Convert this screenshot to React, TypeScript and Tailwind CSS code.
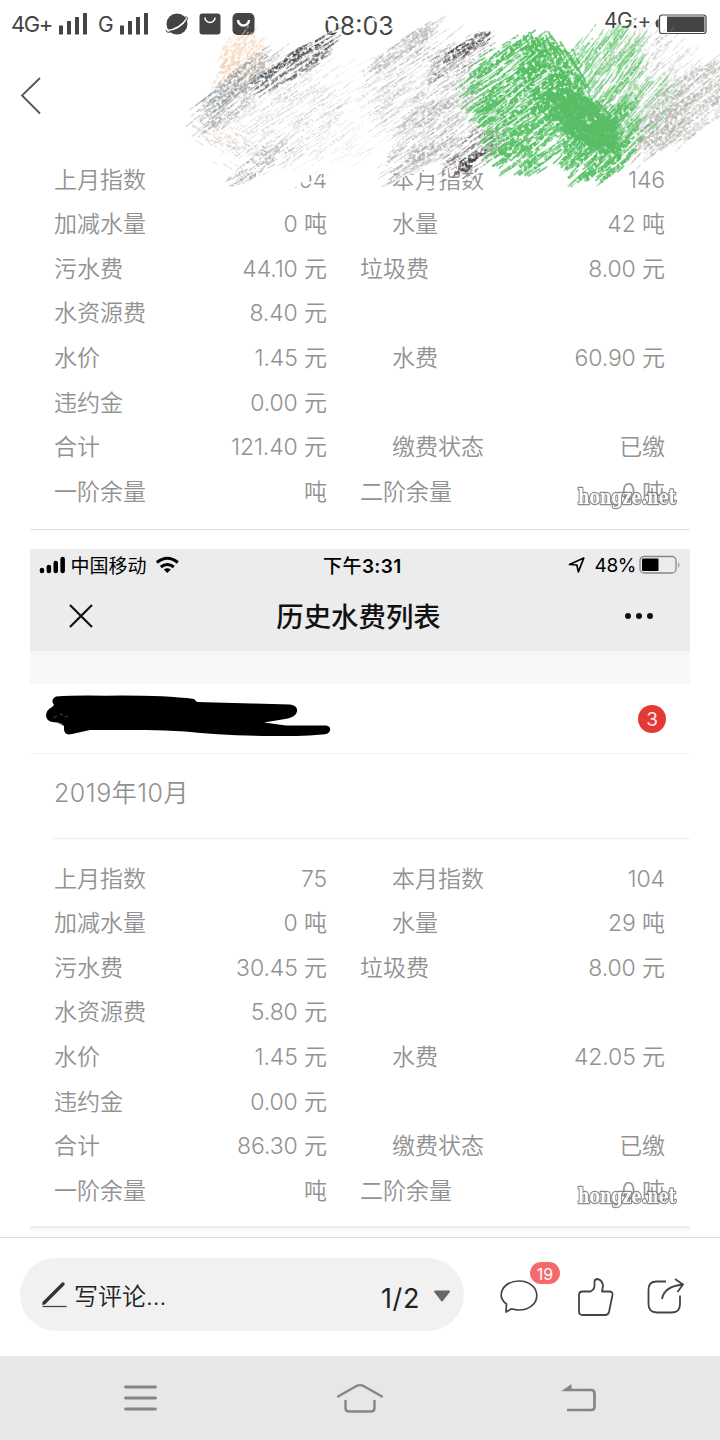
import React from 'react';

type Row = {
  label: string;
  value: string;
  label2?: string;
  value2?: string;
  indent?: boolean;
};

const septemberRows: Row[] = [
  { label: '上月指数', value: '104', label2: '本月指数', value2: '146', indent: true },
  { label: '加减水量', value: '0 吨', label2: '水量', value2: '42 吨', indent: true },
  { label: '污水费', value: '44.10 元', label2: '垃圾费', value2: '8.00 元' },
  { label: '水资源费', value: '8.40 元' },
  { label: '水价', value: '1.45 元', label2: '水费', value2: '60.90 元', indent: true },
  { label: '违约金', value: '0.00 元' },
  { label: '合计', value: '121.40 元', label2: '缴费状态', value2: '已缴', indent: true },
  { label: '一阶余量', value: '吨', label2: '二阶余量', value2: '0 吨' },
];

const octoberRows: Row[] = [
  { label: '上月指数', value: '75', label2: '本月指数', value2: '104', indent: true },
  { label: '加减水量', value: '0 吨', label2: '水量', value2: '29 吨', indent: true },
  { label: '污水费', value: '30.45 元', label2: '垃圾费', value2: '8.00 元' },
  { label: '水资源费', value: '5.80 元' },
  { label: '水价', value: '1.45 元', label2: '水费', value2: '42.05 元', indent: true },
  { label: '违约金', value: '0.00 元' },
  { label: '合计', value: '86.30 元', label2: '缴费状态', value2: '已缴', indent: true },
  { label: '一阶余量', value: '吨', label2: '二阶余量', value2: '0 吨' },
];

// Crayon patches: an ellipse turned to the stroke direction, filled with hatching
type Patch = {
  x: number;
  y: number;
  along: number;
  across: number;
  angle: number;
  count: number;
  len: number;
  width: number;
  color: string;
  opacity: number;
};

const greyPatches: Patch[] = [
  { x: 243, y: 58, along: 26, across: 22, angle: -52, count: 190, len: 10, width: 1.8, color: '#f8d3b6', opacity: 0.5 },
  { x: 230, y: 74, along: 20, across: 12, angle: -52, count: 50, len: 8, width: 1.3, color: '#eec3a0', opacity: 0.5 },
  { x: 220, y: 134, along: 26, across: 12, angle: 38, count: 60, len: 6, width: 1.2, color: '#e4c4b0', opacity: 0.5 },
  { x: 284, y: 112, along: 62, across: 56, angle: -34, count: 430, len: 14, width: 1, color: '#a0a0a0', opacity: 0.32 },
  { x: 236, y: 146, along: 44, across: 26, angle: 30, count: 60, len: 8, width: 1.2, color: '#a5a2a0', opacity: 0.4 },
  { x: 238, y: 83, along: 48, across: 13, angle: -38, count: 130, len: 26, width: 1.4, color: '#969a9b', opacity: 0.45 },
  { x: 224, y: 108, along: 32, across: 14, angle: -36, count: 80, len: 18, width: 1.4, color: '#9b9f9f', opacity: 0.4 },
  { x: 296, y: 64, along: 46, across: 13, angle: -33, count: 110, len: 22, width: 1.3, color: '#5a5a5a', opacity: 0.5 },
  { x: 290, y: 59, along: 42, across: 4, angle: -33, count: 38, len: 20, width: 1.6, color: '#4a4a4a', opacity: 0.6 },
  { x: 260, y: 164, along: 34, across: 12, angle: -33, count: 55, len: 18, width: 1.4, color: '#a0a0a0', opacity: 0.45 },
  { x: 360, y: 110, along: 76, across: 50, angle: -33, count: 190, len: 14, width: 1, color: '#bbb', opacity: 0.28 },
  { x: 425, y: 84, along: 62, across: 44, angle: -34, count: 330, len: 20, width: 1.1, color: '#a4a4a4', opacity: 0.34 },
  { x: 406, y: 46, along: 44, across: 8, angle: -36, count: 60, len: 22, width: 1.6, color: '#a8a8a8', opacity: 0.45 },
  { x: 438, y: 130, along: 62, across: 28, angle: -34, count: 280, len: 19, width: 1.1, color: '#a29ea0', opacity: 0.4 },
  { x: 418, y: 160, along: 34, across: 8, angle: -34, count: 50, len: 22, width: 1.5, color: '#a8a8a8', opacity: 0.45 },
  { x: 458, y: 58, along: 38, across: 18, angle: -33, count: 90, len: 14, width: 1.1, color: '#6b6468', opacity: 0.4 },
  { x: 468, y: 46, along: 24, across: 7, angle: -33, count: 40, len: 15, width: 1.6, color: '#4c474a', opacity: 0.6 },
  { x: 478, y: 148, along: 36, across: 18, angle: -34, count: 110, len: 15, width: 1.2, color: '#6b6468', opacity: 0.5 },
  { x: 474, y: 160, along: 20, across: 7, angle: -34, count: 32, len: 15, width: 2, color: '#454043', opacity: 0.65 },
  { x: 644, y: 82, along: 56, across: 54, angle: -46, count: 380, len: 15, width: 1.1, color: '#b4acae', opacity: 0.32 },
  { x: 688, y: 104, along: 62, across: 28, angle: -40, count: 260, len: 26, width: 1.5, color: '#b0adaa', opacity: 0.42 },
  { x: 662, y: 130, along: 44, across: 14, angle: -44, count: 80, len: 24, width: 1.5, color: '#aeaba8', opacity: 0.42 },
];

const greenPatches: Patch[] = [
  { x: 598, y: 86, along: 60, across: 42, angle: -53, count: 300, len: 24, width: 1.4, color: '#66c871', opacity: 0.6 },
  { x: 635, y: 118, along: 52, across: 22, angle: -48, count: 110, len: 18, width: 1.1, color: '#7ecb87', opacity: 0.5 },
  { x: 516, y: 82, along: 52, across: 38, angle: -36, count: 330, len: 26, width: 1.9, color: '#55c163', opacity: 0.8 },
  { x: 555, y: 76, along: 42, across: 27, angle: 60, count: 230, len: 18, width: 2.2, color: '#55c163', opacity: 0.8 },
  { x: 533, y: 132, along: 50, across: 36, angle: -37, count: 250, len: 22, width: 1.8, color: '#58c267', opacity: 0.8 },
  { x: 602, y: 142, along: 44, across: 32, angle: -44, count: 270, len: 20, width: 1.9, color: '#57c166', opacity: 0.8 },
  { x: 571, y: 108, along: 56, across: 22, angle: 42, count: 300, len: 20, width: 3, color: '#56bf64', opacity: 0.8 },
];

const corePatch: Patch = {
  x: 584, y: 120, along: 38, across: 19, angle: 36, count: 190, len: 14, width: 4, color: '#5abe66', opacity: 0.55,
};

const highlightPatch: Patch = {
  x: 508, y: 94, along: 46, across: 40, angle: -34, count: 80, len: 16, width: 1.1, color: '#fff', opacity: 0.7,
};

const makeRandom = (seed: number) => {
  let s = seed;
  return () => {
    s = (s * 16807) % 2147483647;
    return s / 2147483647;
  };
};

const hatch = (patch: Patch, seed: number) => {
  const rnd = makeRandom(seed * 7919 + 13);
  const a = (patch.angle * Math.PI) / 180;
  const lines: string[] = [];
  for (let i = 0; i < patch.count; i++) {
    // Strokes thin out towards the rim, so a patch has no hard outline
    const r = Math.sqrt(rnd()) * (0.8 + rnd() * 0.35);
    const t = rnd() * Math.PI * 2;
    const u = r * Math.cos(t) * patch.along;
    const v = r * Math.sin(t) * patch.across;
    const cx = patch.x + u * Math.cos(a) - v * Math.sin(a);
    const cy = patch.y + u * Math.sin(a) + v * Math.cos(a);
    const half = (patch.len * (0.3 + rnd())) / 2;
    const b = a + (rnd() - 0.5) * 0.16;
    const dx = Math.cos(b) * half;
    const dy = Math.sin(b) * half;
    lines.push(
      `M${(cx - dx).toFixed(1)} ${(cy - dy).toFixed(1)}L${(cx + dx).toFixed(1)} ${(cy + dy).toFixed(1)}`
    );
  }
  return lines;
};

const Hatching: React.FC<{ patch: Patch; seed: number }> = ({ patch, seed }) => (
  <g stroke={patch.color} strokeWidth={patch.width} strokeOpacity={patch.opacity}>
    {hatch(patch, seed).map((d, i) => (
      <path key={i} d={d} />
    ))}
  </g>
);

const Scribble: React.FC = () => (
  <svg
    className="absolute left-0 top-0 pointer-events-none"
    width="720"
    height="200"
    viewBox="0 0 720 200"
    fill="none"
  >
    <defs>
      <filter id="grain" x="0" y="0" width="720" height="200" filterUnits="userSpaceOnUse" colorInterpolationFilters="sRGB">
        <feTurbulence type="fractalNoise" baseFrequency="0.32" numOctaves="2" seed="4" result="noise" />
        <feColorMatrix
          in="noise"
          type="matrix"
          values="0 0 0 0 0  0 0 0 0 0  0 0 0 0 0  3.500 0 0 0 -1"
          result="holes"
        />
        <feComposite in="SourceGraphic" in2="holes" operator="in" />
        <feGaussianBlur stdDeviation="0.4" />
      </filter>
      <filter id="waxy" x="0" y="0" width="720" height="200" filterUnits="userSpaceOnUse" colorInterpolationFilters="sRGB">
        <feTurbulence type="fractalNoise" baseFrequency="0.28" numOctaves="2" seed="9" result="noise" />
        <feColorMatrix
          in="noise"
          type="matrix"
          values="0 0 0 0 0  0 0 0 0 0  0 0 0 0 0  4 0 0 0 -0.900"
          result="holes"
        />
        <feComposite in="SourceGraphic" in2="holes" operator="in" />
        <feGaussianBlur stdDeviation="0.4" />
      </filter>
    </defs>
    {/* Erased parts of the text under the crayon */}
    <path
      d="M284 174l48-5M284 183l22-6M290 172l8 14M398 173l24-5M424 169l18 3M449 170l14-2"
      stroke="#fff"
      strokeWidth="8"
    />
    <path
      d="M326 19l14 4M350 30l12-4M372 18l10 7M384 33l8-5M328 33l14-3M615 27l12-3M634 18l8-4M306 184l10-3M318 180l12-4"
      stroke="#fff"
      strokeWidth="2"
    />
    <path d="M392 184l20-14M408 190l12-9M432 188l16-15M466 179l17-9" stroke="#fff" strokeWidth="2" />
    <g filter="url(#grain)">
      {greyPatches.map((patch, i) => (
        <Hatching key={i} patch={patch} seed={i + 1} />
      ))}
    </g>
    <g filter="url(#waxy)">
      {greenPatches.map((patch, i) => (
        <Hatching key={i} patch={patch} seed={i + 41} />
      ))}
      <Hatching patch={highlightPatch} seed={71} />
    </g>
    <Hatching patch={corePatch} seed={81} />
  </svg>
);

const Signal: React.FC = () => (
  <svg width="30" height="24" viewBox="0 0 30 24" fill="#444">
    <path d="M1 13.500h4v9H1zM9 9h4v13.500H9zM17 5h4v17.500h-4zM25 1h4v21.500h-4z" />
  </svg>
);

const StatusBar: React.FC = () => (
  <div className="h-12 flex items-start text-[#444] pl-[11px] pr-3">
    <div className="flex items-center h-12 w-[314px]">
      <span className="text-[22px] tracking-[-1.4px] w-[47px] mt-px">4G+</span>
      <Signal />
      <span className="text-[21px] ml-[10px] w-[21px] mt-[2px]">G</span>
      <Signal />
      <svg className="ml-4" width="24" height="24" viewBox="0 0 24 24">
        <circle cx="12" cy="12" r="10.500" fill="#444" />
        <path d="M2 18.500C9 18 17 14 22.500 6" fill="none" stroke="#fff" strokeWidth="1.600" />
        <path d="M20 5q4 0 2 3-4 7-13 11-8 3-8-1" fill="none" stroke="#444" strokeWidth="1" />
      </svg>
      <svg className="ml-[10px]" width="22" height="22" viewBox="0 0 22 22">
        <rect x="0.500" y="0.500" width="21" height="21" rx="3" fill="#444" />
        <path d="M6 4.500a5 5 0 0 0 10 0" fill="none" stroke="#fff" strokeWidth="1.500" />
      </svg>
      <svg className="ml-[11px]" width="23" height="22" viewBox="0 0 23 22">
        <rect x="0.500" y="0" width="22" height="22" rx="5" fill="#444" />
        <path d="M6 7a5.500 5.500 0 0 0 11 0" fill="none" stroke="#fff" strokeWidth="2.400" />
      </svg>
    </div>
    <span className="text-[25px] leading-[52px] w-[281px] whitespace-nowrap">08:03</span>
    <div className="flex items-start h-12 gap-[6px]">
      <span className="text-[21px] leading-[41px] w-[45px] tracking-[-0.6px] whitespace-nowrap">4G:+</span>
      <svg className="mt-[14px]" width="53" height="21" viewBox="0 0 53 21">
        <path d="M3.500 5v9q-3-1-3-4.500T3.500 5Z" fill="#444" />
        <rect x="4.500" y="1" width="46.500" height="18.500" rx="2.500" fill="#fff" stroke="#444" strokeWidth="1.200" />
        <rect x="12" y="2.500" width="37.500" height="15.500" fill="#444" />
      </svg>
    </div>
  </div>
);

const BillRows: React.FC<{ rows: Row[] }> = ({ rows }) => (
  <div className="flex flex-col text-[23px] text-[#929292] font-[350]">
    {rows.map((row) => (
      <div key={row.label} className="h-[44.640px] flex items-center pl-6 pr-[25px] pt-[3px] whitespace-nowrap">
        <div className="flex justify-between w-[273px]">
          <span>{row.label}</span>
          <span className="tracking-[-0.1px]">{row.value}</span>
        </div>
        <div className={`flex flex-1 justify-between ${row.indent ? 'pl-[65px]' : 'pl-[33px]'}`}>
          <span>{row.label2}</span>
          <span className="tracking-[-0.1px]">{row.value2}</span>
        </div>
      </div>
    ))}
  </div>
);

const Watermark: React.FC = () => (
  <svg className="absolute right-3 bottom-0 overflow-visible" width="102" height="34" viewBox="0 0 102 34">
    <text
      x="2"
      y="24"
      textLength="98"
      lengthAdjust="spacingAndGlyphs"
      fontFamily="'DejaVu Serif', serif"
      fontWeight="700"
      fontSize="20"
      fill="#fff"
      stroke="#6e6e6e"
      strokeWidth="2.600"
      strokeLinejoin="round"
      paintOrder="stroke"
      opacity="0.8"
    >
      hongze.net
    </text>
  </svg>
);

const PhoneHeader: React.FC = () => (
  <div className="h-[102px] bg-[#ececec] text-black">
    <div className="h-8 flex items-center text-[19px] px-[9px]">
      <svg width="27" height="18" viewBox="0 0 27 18">
        <path d="M3 14v1M10 11v4M17 7v8M24 3v12" stroke="#000" strokeWidth="4.600" strokeLinecap="round" />
      </svg>
      <span className="ml-[5px] mt-[4px] w-[82px] whitespace-nowrap">中国移动</span>
      <svg className="ml-[4px] -mt-px" width="25" height="18" viewBox="0 0 24 18" fill="none" stroke="#000" strokeWidth="3">
        <path d="M1.500 6.500q10.500-8.500 21 0M5.500 11q6.500-5 13 0" />
        <path d="M8.500 13.500q3.500-2.500 7 0L12 17Z" fill="#000" stroke="none" />
      </svg>
      <span className="ml-[143px] mt-[4px] w-[82px] font-medium tracking-[0.4px] whitespace-nowrap">
        下午<b className="font-semibold">3:31</b>
      </span>
      <svg className="ml-[164px]" width="18" height="18" viewBox="0 0 18 18" fill="none" stroke="#000" strokeWidth="1.700" strokeLinejoin="round">
        <path d="M1.500 8.500L16 2l-5.500 14-1.500-7Z" />
      </svg>
      <span className="ml-[9px] mt-[3px] w-[43px] tracking-[-0.5px]">48%</span>
      <svg className="shrink-0" width="44" height="20" viewBox="0 0 44 20">
        <rect x="3" y="1.500" width="36" height="16.500" rx="4" fill="none" stroke="#888" strokeWidth="1.300" />
        <rect x="5" y="3.500" width="16.500" height="12.500" rx="1" fill="#000" />
        <path d="M41 7q3 3 0 6Z" fill="#999" />
      </svg>
    </div>
    <div className="h-[70px] flex items-center justify-between pl-[38px] pr-9">
      <svg width="26" height="26" viewBox="0 0 26 26">
        <path d="M2 2l22 22M24 2L2 24" stroke="#111" strokeWidth="2.200" />
      </svg>
      <span className="text-[27.400px] font-medium -ml-px mt-[4px] text-[#111]">历史水费列表</span>
      <svg width="30" height="8" viewBox="0 0 30 8" fill="#111">
        <circle cx="4" cy="4" r="3" />
        <circle cx="15" cy="4" r="3" />
        <circle cx="26" cy="4" r="3" />
      </svg>
    </div>
  </div>
);

const CommentBar: React.FC = () => (
  <div className="h-[119px] border-t border-[#dedede] bg-white flex items-start pl-5 pt-5">
    <div className="w-[444px] h-[73px] rounded-full bg-[#f1f1f1] flex items-center pl-[21px] pr-[13px] text-[#222]">
      <svg width="26" height="28" viewBox="0 0 26 28">
        <path d="M3.500 21.500L22 3" stroke="#333" strokeWidth="3.400" strokeLinecap="round" />
        <path d="M1.500 25.500h24" stroke="#444" strokeWidth="1.300" />
        <path d="M1 24l1-4 3 3Z" fill="#333" />
      </svg>
      <span className="ml-[7px] text-[24px] mt-[5px] font-[350]">写评论...</span>
      <span className="ml-auto text-[27px] mt-[10px] tracking-[0.6px]">1/2</span>
      <svg className="ml-[13px] mt-[3px]" width="18" height="14" viewBox="0 0 18 14">
        <path d="M2 2.500h14L9 11.500Z" fill="#666" stroke="#666" strokeWidth="2" strokeLinejoin="round" />
      </svg>
    </div>
    <div className="relative ml-9 mt-[20px]">
      <svg width="38" height="36" viewBox="0 0 38 36" fill="none" stroke="#444" strokeWidth="1.700" strokeLinejoin="round">
        <path d="M6.500 26C3 23.500 1.200 20 1.200 17.300 1.200 9 9 3 19 3s17.800 6 17.800 14.500S29 32 19 32c-3 0-5.500-.5-7.500-1.200L6 34Z" />
      </svg>
      <span className="absolute left-[30px] -top-4 w-[30px] h-[22px] rounded-full bg-[#f5696c] text-white text-[16px] leading-[24px] text-center">
        19
      </span>
    </div>
    <svg className="ml-[40px] mt-[19px]" width="36" height="40" viewBox="0 0 36 40" fill="none" stroke="#444" strokeWidth="1.800" strokeLinejoin="round">
      <path d="M4.500 14.500h8q4-2 4-6V5q0-3 3-3 5 1 5.500 7l-1 5.500h7q4 0 3.500 3.500l-3.500 17q-.7 3-4 3H4.500Q1 38 1 34.500V18q0-3.500 3.500-3.500Z" />
    </svg>
    <svg className="ml-[33px] mt-[19px]" width="38" height="38" viewBox="0 0 38 38" fill="none" stroke="#444" strokeWidth="1.800">
      <path d="M19 4.500H9.500Q1.500 4.500 1.500 13v14q0 8.500 8.500 8.500h15q8 0 8-8.500v-8.500" />
      <path d="M15 22Q17 9.500 36 7.500M28 2l8 5.500-5.500 7.500" />
    </svg>
  </div>
);

const NavBar: React.FC = () => (
  <div className="h-[84px] bg-[#e7e7e7] flex items-center justify-between pl-[123px] pr-[123px] text-[#858585]">
    <svg width="35" height="28" viewBox="0 0 35 28" stroke="currentColor" strokeWidth="2.800" strokeLinecap="round">
      <path d="M2.500 3h30M2.500 14h30M2.500 25h30" />
    </svg>
    <svg width="48" height="32" viewBox="0 0 48 32" fill="none" stroke="currentColor" strokeWidth="2.400" strokeLinecap="round" strokeLinejoin="round">
      <path d="M2 14.500L20.500 4q3.500-1.800 7 0L46 14.500M9.500 19v7q0 3.500 3.500 3.500h22q3.500 0 3.500-3.500v-7" />
    </svg>
    <svg width="36" height="30" viewBox="0 0 36 30" fill="none" stroke="currentColor" strokeWidth="2.700">
      <path d="M3 7h27q3.500 0 3.500 3.500V24q0 3-3.500 3H6" />
      <path d="M0 8.500L10.500 1v6Z" fill="currentColor" stroke="none" />
    </svg>
  </div>
);

const App: React.FC = () => {
  return (
    <div className="relative w-[720px] h-[1440px] bg-white overflow-hidden flex flex-col font-[Inter,'Noto_Sans_CJK_SC',sans-serif]">
      <StatusBar />
      <div className="h-[108px] shrink-0 pl-5 pt-7">
        <svg width="22" height="40" viewBox="0 0 22 40" fill="none" stroke="#555" strokeWidth="1.800">
          <path d="M20 2L2 19.500l18 18" />
        </svg>
      </div>

      <div className="h-[1081px] shrink-0 px-[30px]">
        <div className="relative h-[374px] border-b border-[#ddd]">
          <BillRows rows={septemberRows} />
          <div className="absolute right-0 bottom-[15px]">
            <Watermark />
          </div>
        </div>

        <div className="relative mt-[19px] h-[679px] border-b-2 border-[#ebebeb]">
          <PhoneHeader />
          <div className="h-[33px] bg-[#f7f7f7]" />
          <div className="h-[70px] flex items-center justify-between pr-6 border-b border-[#f0f0f0]">
            <svg className="ml-4 -mt-[7px]" width="286" height="42" viewBox="0 0 286 42">
              <path
                d="M10 2.500Q30 1 60 1.700 115 1 148 5l3 3 55 1.500 38 1q8 1 7 7-1 5-9 7l-24 4 22 3h40q5 1 4 5-1 4-8 4-30 2.500-59 1.500-45-1-78-4.500-25-2-49-1.500H44l-18 4q-8 2-8-5V32l-6-3.500Q1 29 0 22q0-6 6-9l2-2Q4 6 10 2.500Z"
                fill="#000"
              />
              <path d="M7 24l4-2M14 20l3 1M11 29l6 1M19 23l3-1" stroke="#777" strokeWidth="0.600" />
            </svg>
            <span className="size-7 rounded-full bg-[#e53935] text-[#ffe9e7] text-[19px] leading-[29px] text-center">3</span>
          </div>
          <div className="h-[85px] ml-[22px] pl-[2px] border-b border-[#eee] text-[25px] leading-[79px] tracking-[0.5px] font-[350] text-[#929292]">
            2019年10月
          </div>
          <div className="pt-[16px]">
            <BillRows rows={octoberRows} />
          </div>
          <div className="absolute right-0 bottom-[13px]">
            <Watermark />
          </div>
        </div>
        <div className="h-[3px] bg-[#f7f7f7]" />
      </div>

      <CommentBar />
      <NavBar />
      <Scribble />
    </div>
  );
};

export default App;
